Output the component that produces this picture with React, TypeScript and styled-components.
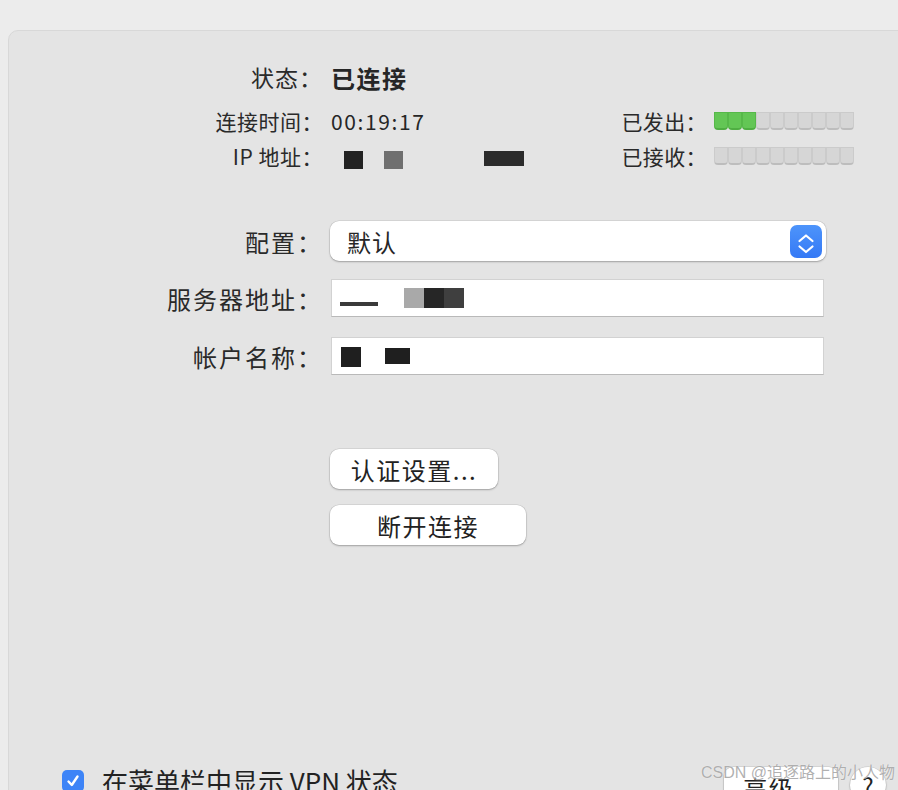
import React from 'react';
import styled, { createGlobalStyle } from 'styled-components';

const GlobalStyle = createGlobalStyle`
  html, body {
    margin: 0;
    padding: 0;
    background: #ececec;
    overflow: hidden;
  }
  body {
    font-family: 'Noto Sans CJK SC', 'Noto Sans', sans-serif;
    color: #262626;
  }
`;

const Panel = styled.div`
  position: relative;
  margin: 30px 0 0 8px;
  width: 920px;
  height: 800px;
  background: #e4e4e4;
  border: 1px solid #d8d8d8;
  border-radius: 10px 0 0 0;
  box-sizing: border-box;
  padding-top: 30px;
`;

const Row = styled.div<{ $top: number; $h: number }>`
  display: flex;
  align-items: center;
  margin-top: ${p => p.$top}px;
  height: ${p => p.$h}px;
`;

// the fullwidth colon sits left in its em box, so the column runs a bit past x=310
const Label = styled.div<{ $size: number; $spacing: number }>`
  width: 314px;
  flex: none;
  text-align: right;
  font-size: ${p => p.$size}px;
  letter-spacing: ${p => p.$spacing}px;
  white-space: nowrap;
  color: #2a2a2a;
`;

const Value = styled.div<{ $size: number; $bold?: boolean; $spacing?: number }>`
  margin-left: 8px;
  width: 250px;
  flex: none;
  display: flex;
  align-items: center;
  font-size: ${p => p.$size}px;
  font-weight: ${p => (p.$bold ? 700 : 400)};
  letter-spacing: ${p => p.$spacing || 0}px;
  color: #262626;
  white-space: nowrap;
`;

const SideLabel = styled.div`
  width: 126px;
  flex: none;
  text-align: right;
  font-size: 21px;
  letter-spacing: 0.4px;
  color: #2a2a2a;
`;

const Meter = styled.div`
  margin-left: 7px;
  display: flex;
  height: 18px;
`;

const Segment = styled.div<{ $on: boolean }>`
  width: 14px;
  height: 18px;
  box-sizing: border-box;
  background: ${p => (p.$on ? '#63c655' : '#d6d6d6')};
  border: 1px solid ${p => (p.$on ? '#56b849' : '#cbcbcb')};
  border-bottom: 2px solid ${p => (p.$on ? '#4fae42' : '#bdbdbd')};
  border-radius: 0 0 4px 4px;
`;

const Redact = styled.span<{ $w: number; $h: number; $tone: string; $gap: number; $dy?: number }>`
  display: inline-block;
  width: ${p => p.$w}px;
  height: ${p => p.$h}px;
  margin-left: ${p => p.$gap}px;
  background: ${p => p.$tone};
  transform: translateY(${p => p.$dy || 0}px);
`;

const Select = styled.div`
  margin-left: 7px;
  width: 496px;
  height: 40px;
  box-sizing: border-box;
  background: #fff;
  border-radius: 9px;
  box-shadow: 0 0 0 0.5px rgba(0, 0, 0, 0.12), 0 1px 2px rgba(0, 0, 0, 0.25);
  display: flex;
  align-items: center;
  justify-content: space-between;
  padding: 0 4px 0 17px;
  font-size: 24px;
  letter-spacing: 1px;
`;

const Stepper = styled.div`
  width: 32px;
  height: 33px;
  border-radius: 7px;
  background: linear-gradient(#4d94fb, #3579f5);
  display: flex;
  align-items: center;
  justify-content: center;
`;

const Field = styled.div`
  margin-left: 8px;
  width: 493px;
  height: 38px;
  box-sizing: border-box;
  background: #fff;
  border: 1px solid #d2d2d2;
  border-bottom: 1px solid #b9b9b9;
  display: flex;
  align-items: center;
  padding-left: 8px;
`;

const ButtonRow = styled.div<{ $top: number }>`
  margin-top: ${p => p.$top}px;
  padding-left: 321px;
  display: flex;
`;

const PushButton = styled.div<{ $w: number }>`
  width: ${p => p.$w}px;
  height: 40px;
  box-sizing: border-box;
  background: #fff;
  border-radius: 9px;
  box-shadow: 0 0 0 0.5px rgba(0, 0, 0, 0.12), 0 1px 2px rgba(0, 0, 0, 0.25);
  display: flex;
  align-items: center;
  justify-content: center;
  font-size: 24px;
  color: #222;
  letter-spacing: 1.5px;
`;

const Footer = styled.div`
  margin-top: 217px;
  padding: 0 41px 0 53px;
  display: flex;
  justify-content: space-between;
  align-items: flex-start;
`;

const CheckLabel = styled.label`
  display: flex;
  align-items: center;
  gap: 18px;
  font-size: 26px;
  color: #222;
`;

const CheckBox = styled.span`
  width: 22px;
  height: 22px;
  border-radius: 5px;
  background: #3d84f7;
  display: flex;
  align-items: center;
  justify-content: center;
`;

const FooterActions = styled.div`
  display: flex;
  gap: 12px;
  padding-top: 5px;
`;

const HelpButton = styled.div`
  width: 36px;
  height: 36px;
  border-radius: 50%;
  background: #fff;
  box-shadow: 0 0 0 0.5px rgba(0, 0, 0, 0.12), 0 1px 2px rgba(0, 0, 0, 0.25);
  display: flex;
  align-items: center;
  justify-content: center;
  font-size: 24px;
  color: #222;
`;

const Watermark = styled.div`
  position: absolute;
  right: 3px;
  bottom: 7px;
  font-family: 'Liberation Sans', 'Noto Sans CJK SC', sans-serif;
  font-size: 16px;
  color: rgba(150, 150, 150, 0.75);
  text-shadow: 0 0 1px rgba(255, 255, 255, 0.9);
  pointer-events: none;
`;

const Meterbar = ({ lit }: { lit: number }) => (
  <Meter>
    {Array.from({ length: 10 }).map((_, i) => (
      <Segment key={i} $on={i < lit} />
    ))}
  </Meter>
);

export default function App() {
  return (
    <>
      <GlobalStyle />
      <Panel>
        <Row $top={0} $h={32}>
          <Label $size={23} $spacing={1}>状态：</Label>
          <Value $size={24} $bold $spacing={1.5}>已连接</Value>
        </Row>
        <Row $top={14} $h={28}>
          <Label $size={21} $spacing={0.5}>连接时间：</Label>
          <Value $size={21} $spacing={1.6}>00:19:17</Value>
          <SideLabel>已发出：</SideLabel>
          <Meterbar lit={3} />
        </Row>
        <Row $top={7} $h={28}>
          <Label $size={21} $spacing={0.5}>IP 地址：</Label>
          <Value $size={21}>
            <Redact $w={19} $h={18} $tone="#222" $gap={13} $dy={4} />
            <Redact $w={19} $h={18} $tone="#6f6f6f" $gap={21} $dy={4} />
            <Redact $w={40} $h={15} $tone="#2b2b2b" $gap={81} $dy={2} />
          </Value>
          <SideLabel>已接收：</SideLabel>
          <Meterbar lit={0} />
        </Row>

        <Row $top={51} $h={40}>
          <Label $size={24} $spacing={2}>配置：</Label>
          <Select>
            <span>默认</span>
            <Stepper>
              <svg width="32" height="33" viewBox="0 0 32 33" fill="none" stroke="#fff" strokeWidth="2.2" strokeLinecap="round" strokeLinejoin="round">
                <path d="M9.5 16 L16 10.5 L22.5 16" />
                <path d="M9.5 21.5 L16 27 L22.5 21.5" />
              </svg>
            </Stepper>
          </Select>
        </Row>
        <Row $top={18} $h={38}>
          <Label $size={24} $spacing={2}>服务器地址：</Label>
          <Field>
            <Redact $w={38} $h={4} $tone="#3a3a3a" $gap={0} $dy={6} />
            <Redact $w={20} $h={20} $tone="#a9a9a9" $gap={26} />
            <Redact $w={20} $h={20} $tone="#262626" $gap={0} />
            <Redact $w={20} $h={20} $tone="#3f3f3f" $gap={0} />
          </Field>
        </Row>
        <Row $top={20} $h={38}>
          <Label $size={24} $spacing={2}>帐户名称：</Label>
          <Field>
            <Redact $w={20} $h={20} $tone="#1f1f1f" $gap={1} $dy={1} />
            <Redact $w={25} $h={16} $tone="#1f1f1f" $gap={24} />
          </Field>
        </Row>

        <ButtonRow $top={74}>
          <PushButton $w={168}>认证设置...</PushButton>
        </ButtonRow>
        <ButtonRow $top={16}>
          <PushButton $w={196}>断开连接</PushButton>
        </ButtonRow>

        <Footer>
          <CheckLabel>
            <CheckBox>
              <svg width="16" height="16" viewBox="0 0 16 16" fill="none" stroke="#fff" strokeWidth="2.4" strokeLinecap="round" strokeLinejoin="round">
                <path d="M3.5 8.5 L6.8 12 L12.5 3.5" />
              </svg>
            </CheckBox>
            在菜单栏中显示 VPN 状态
          </CheckLabel>
          <FooterActions>
            <PushButton $w={114}>高级...</PushButton>
            <HelpButton>?</HelpButton>
          </FooterActions>
        </Footer>
      </Panel>
      <Watermark>CSDN @追逐路上的小人物</Watermark>
    </>
  );
}
